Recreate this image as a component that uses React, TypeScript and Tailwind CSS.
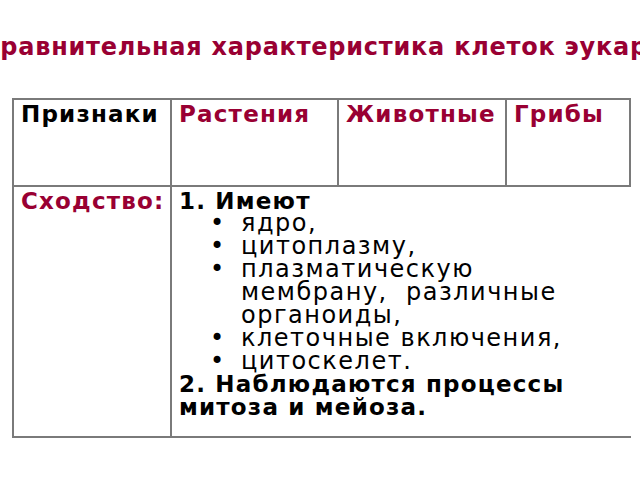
export default function App() {
  const bullets = [
    'ядро,',
    'цитоплазму,',
    'плазматическую мембрану,\u00a0 различные органоиды,',
    'клеточные включения,',
    'цитоскелет.',
  ];

  return (
    <div className="w-[640px] h-[480px] bg-white overflow-hidden font-['DejaVu_Sans',sans-serif]">
      {/* Title, wider than the slide */}
      <div className="h-[98px] pt-[33px] flex justify-start overflow-hidden">
        <div className="-ml-[18px] whitespace-nowrap font-bold text-[24px] leading-[28px] tracking-[0.75px] text-[#990033]">
          Сравнительная характеристика клеток эукариот
        </div>
      </div>

      {/* Table */}
      <div className="ml-[12px] grid grid-cols-[160px_167px_168px_124px] grid-rows-[89px_251px] font-bold text-[23px] tracking-[1.2px]">
        <div className="border-2 border-[#7a7a7a] pl-[7px] leading-[28px] text-black">Признаки</div>
        <div className="border-y-2 border-r-2 border-[#7a7a7a] pl-[7px] leading-[28px] text-[#990033]">Растения</div>
        <div className="border-y-2 border-r-2 border-[#7a7a7a] pl-[7px] leading-[28px] text-[#990033]">Животные</div>
        <div className="border-y-2 border-r-2 border-[#7a7a7a] pl-[7px] leading-[28px] text-[#990033]">Грибы</div>

        <div className="border-x-2 border-b-2 border-[#7a7a7a] pl-[7px] leading-[28px] text-[#990033]">Сходство:</div>
        <div className="col-span-3 border-b-2 border-[#7a7a7a] pl-[7px] pt-[4px] text-black">
          <div className="leading-[21px]">1. Имеют</div>
          <ul className="font-normal text-[24px] leading-[23px] tracking-[1.5px]">
            {bullets.map((b) => (
              <li key={b} className="flex">
                <span className="w-[62px] pl-[31px] shrink-0 tracking-normal">•</span>
                <span className="w-[360px]">{b}</span>
              </li>
            ))}
          </ul>
          <div className="leading-[23px]">
            2. Наблюдаются процессы
            <br />
            митоза и мейоза.
          </div>
        </div>
      </div>
    </div>
  );
}
